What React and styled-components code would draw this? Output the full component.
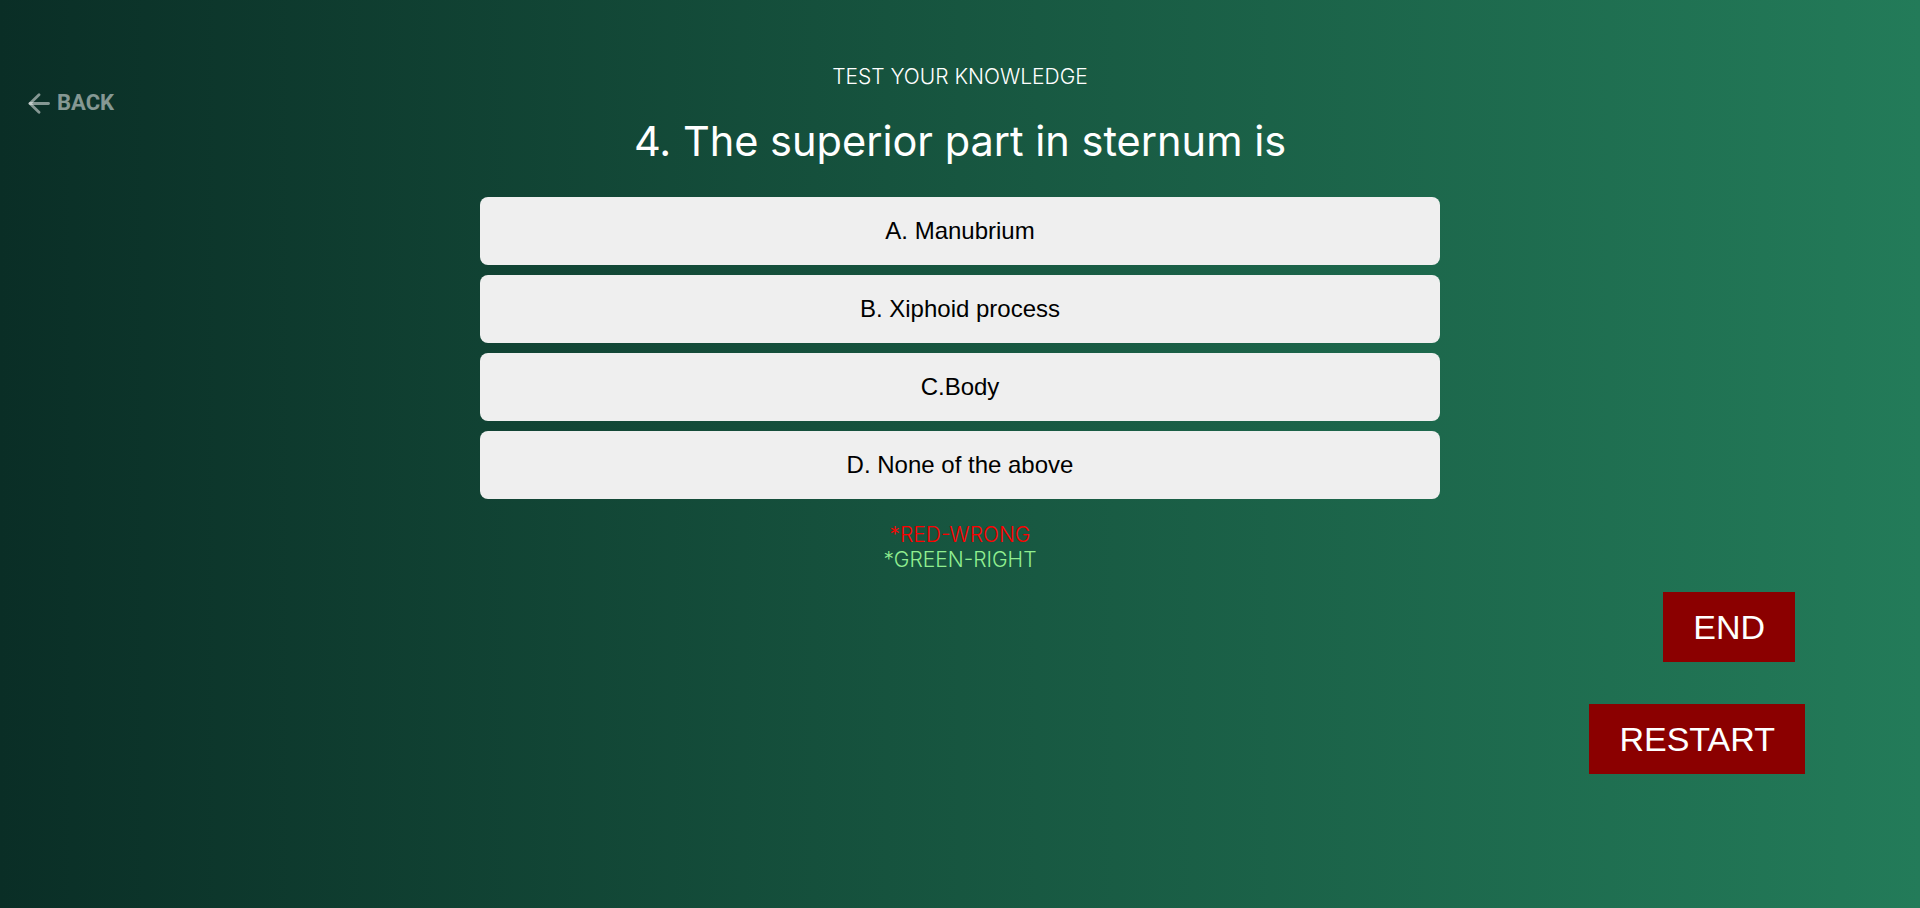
import React from "react";
import styled, { createGlobalStyle } from "styled-components";

const GlobalStyle = createGlobalStyle`
  html, body {
    margin: 0;
    padding: 0;
  }
  body {
    font-family: "Inter", "Noto Sans", sans-serif;
    background: linear-gradient(to right, #0a2e26 0%, #175640 50%, #237b59 100%);
    min-height: 908px;
  }
  * { box-sizing: border-box; }
`;

const Page = styled.div`
  min-height: 908px;
  padding-top: 64px;
  display: flex;
  flex-direction: column;
`;

const Grid = styled.div`
  display: grid;
  grid-template-columns: 1fr 960px 1fr;
`;

const BackLink = styled.a`
  justify-self: start;
  align-self: start;
  margin-top: 27px;
  margin-left: 28px;
  display: flex;
  align-items: center;
  gap: 7px;
  color: rgba(255, 255, 255, 0.5);
  font-family: Roboto, "Noto Sans", sans-serif;
  font-weight: 700;
  font-size: 22px;
  line-height: 24px;
  text-decoration: none;
  cursor: pointer;
`;

const Content = styled.main`
  display: flex;
  flex-direction: column;
  align-items: center;
`;

const Eyebrow = styled.div`
  color: #ffffff;
  font-family: "Inter", "Noto Sans", sans-serif;
  font-weight: 300;
  font-size: 21px;
  line-height: 25px;
`;

const Question = styled.h1`
  margin: 28px 0 0;
  color: #ffffff;
  font-family: "Inter", "Noto Sans", sans-serif;
  font-weight: 400;
  font-size: 41.5px;
  line-height: 48px;
`;

const Options = styled.div`
  margin-top: 32px;
  width: 100%;
  display: flex;
  flex-direction: column;
  gap: 10px;
`;

const Option = styled.button`
  width: 100%;
  height: 68px;
  border: none;
  border-radius: 8px;
  background: #efefef;
  color: #000000;
  font-family: "Liberation Sans", Arial, sans-serif;
  font-size: 24px;
  cursor: pointer;
`;

const Legend = styled.div`
  margin-top: 23px;
  display: flex;
  flex-direction: column;
  align-items: center;
  font-family: "Inter", "Noto Sans", sans-serif;
  font-weight: 300;
  font-size: 21px;
  line-height: 25px;
`;

const LegendLine = styled.span`
  color: ${(p) => p.$color};
`;

const Actions = styled.div`
  margin-top: 20px;
  display: flex;
  flex-direction: column;
  align-items: flex-end;
  gap: 42px;
`;

const ActionButton = styled.button`
  height: 70px;
  padding: 0 30px;
  margin-right: ${(p) => p.$offset}px;
  border: none;
  background: #8b0000;
  color: #ffffff;
  font-family: "Liberation Sans", Arial, sans-serif;
  font-size: 34px;
  cursor: pointer;
`;

const ArrowIcon = () => (
  <svg width="22" height="21" viewBox="0 0 22 21" fill="none" stroke="currentColor" strokeWidth="2.8" strokeLinecap="round" strokeLinejoin="round">
    <path d="M20.5 10.5H2" />
    <path d="M11 1.8 2 10.5 11 19.2" />
  </svg>
);

const options = ["A. Manubrium", "B. Xiphoid process", "C.Body", "D. None of the above"];

export default function App() {
  return (
    <>
      <GlobalStyle />
      <Page>
        <Grid>
          <BackLink>
            <ArrowIcon />
            BACK
          </BackLink>
          <Content>
            <Eyebrow>TEST YOUR KNOWLEDGE</Eyebrow>
            <Question>4. The superior part in sternum is</Question>
            <Options>
              {options.map((o) => (
                <Option key={o}>{o}</Option>
              ))}
            </Options>
            <Legend>
              <LegendLine $color="red">*RED-WRONG</LegendLine>
              <LegendLine $color="lightgreen">*GREEN-RIGHT</LegendLine>
            </Legend>
          </Content>
          <div />
        </Grid>
        <Actions>
          <ActionButton $offset={125}>END</ActionButton>
          <ActionButton $offset={115}>RESTART</ActionButton>
        </Actions>
      </Page>
    </>
  );
}
